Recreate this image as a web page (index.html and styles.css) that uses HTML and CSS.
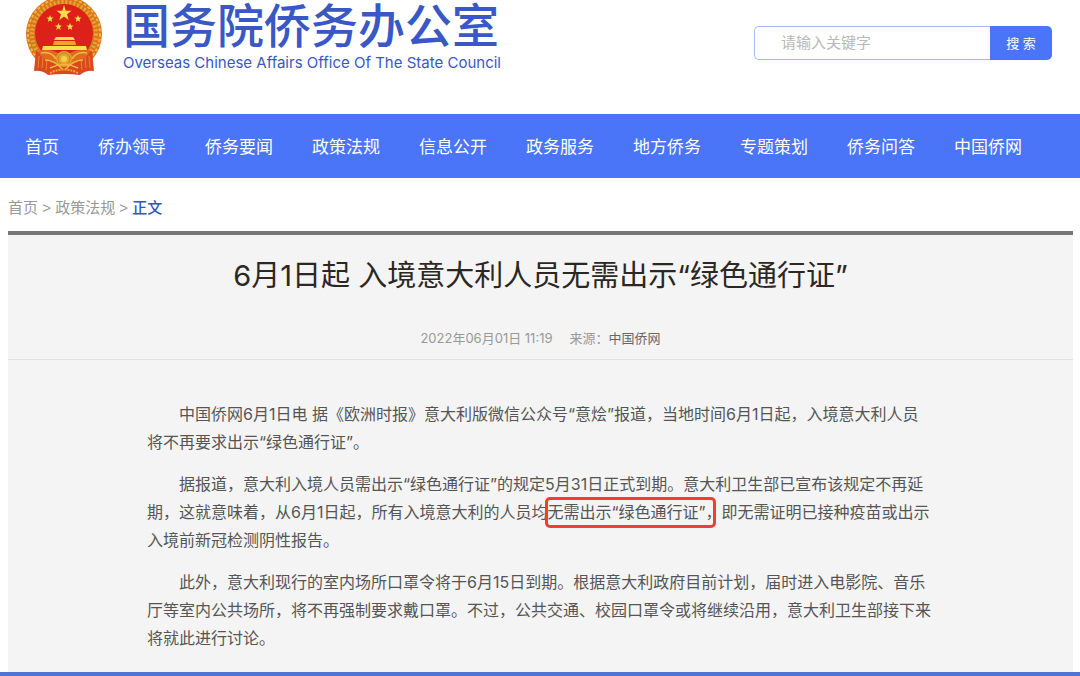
FILE: index.html
```html
<!DOCTYPE html>
<html lang="zh-CN">
<head>
    <meta charset="UTF-8">
    <meta name="viewport" content="width=device-width, initial-scale=1.0">
    <title>国务院侨务办公室</title>
    <link rel="stylesheet" href="styles.css">
</head>
<body>
    <header class="header">
        <a class="logo" href="#">
            <svg class="emblem" viewBox="0 0 78 78" aria-hidden="true">
                <circle cx="39" cy="36" r="38" fill="#d9741f"/>
                <circle cx="39" cy="36" r="36" fill="none" stroke="#f0b83a" stroke-width="2" stroke-dasharray="3 2"/>
                <circle cx="39" cy="36" r="32" fill="none" stroke="#e9a62f" stroke-width="4" stroke-dasharray="2 2"/>
                <circle cx="39" cy="35" r="29" fill="#dc2119"/>
                <g fill="#f9e04a">
                    <path d="M39 7 L40.800 12.800 L46.500 12.800 L42 16.200 L43.700 22 L39 18.500 L34.300 22 L36 16.200 L31.500 12.800 L37.200 12.800 Z"/>
                    <path d="M25 17 L26 19.500 L28.500 19.500 L26.500 21.200 L27.200 24 L25 22.300 L22.800 24 L23.500 21.200 L21.500 19.500 L24 19.500 Z"/>
                    <path d="M53 17 L54 19.500 L56.500 19.500 L54.500 21.200 L55.200 24 L53 22.300 L50.800 24 L51.500 21.200 L49.500 19.500 L52 19.500 Z"/>
                    <path d="M33.500 25 L34.500 27.500 L37 27.500 L35 29.200 L35.700 32 L33.500 30.300 L31.300 32 L32 29.200 L30 27.500 L32.500 27.500 Z"/>
                    <path d="M45 25 L46 27.500 L48.500 27.500 L46.500 29.200 L47.200 32 L45 30.300 L42.800 32 L43.500 29.200 L41.500 27.500 L44 27.500 Z"/>
                    <path d="M31 39 H48 L50 42 H29 Z"/>
                    <path d="M29 43 H50 L51 47 H28 Z" fill="#eda52b"/>
                    <path d="M18 48 H61 L62 52 H17 Z"/>
                </g>
                <path d="M11 53 L24 57 H54 L67 53 L69 73 Q61 72 55 77 Q39 75 23 77 Q17 72 9 73 Z" fill="#d9481f"/>
                <path d="M14 58 L13 70 M18 58 L17 70 M22 60 L21 72 M64 58 L65 70 M60 58 L61 70 M56 60 L57 72" stroke="#e98a2a" stroke-width="1"/>
                <path d="M13 53 Q27 50 34 56 H44 Q51 50 65 53 Q62 61 52 63 L39 69 L26 63 Q16 61 13 53 Z" fill="#df6a20"/>
                <circle cx="39" cy="61" r="8" fill="#e3a62c"/>
                <circle cx="39" cy="61" r="6" fill="none" stroke="#c9421e" stroke-width="1" stroke-dasharray="1 1"/>
                <circle cx="39" cy="61" r="3" fill="#f4cf45"/>
                <path d="M16 55 Q26 53 31 61 M62 55 Q52 53 47 61 M20 62 Q30 62 38 72 M58 62 Q48 62 40 72 M25 70 Q39 63 53 70" fill="none" stroke="#f3b83c" stroke-width="1.500"/>
                <path d="M25 75 Q39 68 53 75" fill="none" stroke="#eda52b" stroke-width="2" stroke-dasharray="2 1"/>
            </svg>
            <span class="logo-text">
                <span class="logo-cn">国务院侨务办公室</span>
                <span class="logo-en">Overseas Chinese Affairs Office Of The State Council</span>
            </span>
        </a>
        <form class="search">
            <input class="search-input" type="text" placeholder="请输入关键字" aria-label="请输入关键字">
            <button class="search-btn" type="button">搜 索</button>
        </form>
    </header>

    <nav class="nav">
        <a href="#">首页</a>
        <a href="#">侨办领导</a>
        <a href="#">侨务要闻</a>
        <a href="#">政策法规</a>
        <a href="#">信息公开</a>
        <a href="#">政务服务</a>
        <a href="#">地方侨务</a>
        <a href="#">专题策划</a>
        <a href="#">侨务问答</a>
        <a href="#">中国侨网</a>
    </nav>

    <div class="crumbs">
        <a href="#">首页</a> &gt; <a href="#">政策法规</a> &gt; <span class="current">正文</span>
    </div>

    <main class="article">
        <h1 class="title">6月1日起 入境意大利人员无需出示“绿色通行证”</h1>
        <div class="meta">
            <span>2022年06月01日 11:19</span>
            <span>来源：<a href="#">中国侨网</a></span>
        </div>
        <div class="content">
            <p>中国侨网6月1日电 据《欧洲时报》意大利版微信公众号“意烩”报道，当地时间6月1日起，入境意大利人员将不再要求出示“绿色通行证”。</p>
            <p>据报道，意大利入境人员需出示“绿色通行证”的规定5月31日正式到期。意大利卫生部已宣布该规定不再延期，这就意味着，从6月1日起，所有入境意大利的人员均<span class="mark">无需出示“绿色通行证”</span>，即无需证明已接种疫苗或出示入境前新冠检测阴性报告。</p>
            <p>此外，意大利现行的室内场所口罩令将于6月15日到期。根据意大利政府目前计划，届时进入电影院、音乐厅等室内公共场所，将不再强制要求戴口罩。不过，公共交通、校园口罩令或将继续沿用，意大利卫生部接下来将就此进行讨论。</p>
        </div>
    </main>
    <footer class="footer"></footer>
</body>
</html>
```

FILE: styles.css
```css
*{
    box-sizing: border-box;
}
body{
    margin: 0;
    background-color: #fff;
    font-family: Inter, "Noto Sans CJK SC", sans-serif;
    font-size: 16px;
    color: #555;
}
a{
    color: inherit;
    text-decoration: none;
}

/* header */
.header{
    display: flex;
    justify-content: space-between;
    align-items: flex-start;
    padding: 0 28px 38px 25px;
}
.logo{
    display: flex;
    gap: 20px;
    color: #3a57c6;
}
.emblem{
    width: 78px;
    height: 78px;
    margin-top: -2px;
}
.logo-text{
    display: flex;
    flex-direction: column;
}
.logo-cn{
    font-size: 47px;
    line-height: 52px;
    font-weight: 500;
    white-space: nowrap;
}
.logo-en{
    font-size: 15px;
    line-height: 22px;
    white-space: nowrap;
}
.search{
    display: flex;
    width: 298px;
    height: 34px;
    margin-top: 26px;
}
.search-input{
    flex: 1;
    min-width: 0;
    padding: 0 26px 2px;
    border: 1px solid #a5bafa;
    border-right: 0;
    border-radius: 5px 0 0 5px;
    font: inherit;
    font-size: 15px;
}
.search-input::placeholder{
    color: #b8b8b8;
}
.search-btn{
    width: 62px;
    padding: 0 0 2px;
    border: 0;
    border-radius: 0 5px 5px 0;
    background-color: #4b75f8;
    color: #fff;
    font: inherit;
    font-size: 13px;
}

/* navigation */
.nav{
    display: flex;
    gap: 39px;
    padding: 2px 25px 0;
    background-color: #4b75f8;
    color: #fff;
    font-size: 17px;
    line-height: 62px;
    white-space: nowrap;
}
.crumbs{
    padding: 6px 8px 0;
    font-family: "Liberation Sans", "Noto Sans CJK SC", sans-serif;
    font-size: 15px;
    line-height: 47px;
    color: #999;
}
.current{
    color: #3553c4;
    font-weight: 500;
}

/* article */
.article{
    margin: 0 7px 0 8px;
    border-top: 4px solid #777;
    background-color: #f4f4f4;
}
.title{
    margin: 0;
    padding-top: 21px;
    font-size: 29px;
    line-height: 40px;
    font-weight: 400;
    text-align: center;
    color: #2b2723;
}
.meta{
    display: flex;
    justify-content: center;
    gap: 17px;
    padding: 31px 0 10px;
    border-bottom: 1px solid #e2e2e2;
    font-size: 13px;
    line-height: 22px;
    color: #999;
}
.meta a{
    color: #666;
}
.content{
    max-width: 787px;
    margin: 0 auto;
    padding: 40px 0 20px;
    line-height: 28px;
}
.content p{
    margin: 0 0 14px;
    text-indent: 2em;
}
.content p:last-child{
    margin-bottom: 0;
}
.mark{
    position: relative;
}
.mark::after{
    content: "";
    position: absolute;
    inset: -5px -10px -6px -2px;
    border: 3px solid #ee4128;
    border-radius: 5px;
}
.footer{
    height: 4px;
    background-color: #4f74d6;
}
```
